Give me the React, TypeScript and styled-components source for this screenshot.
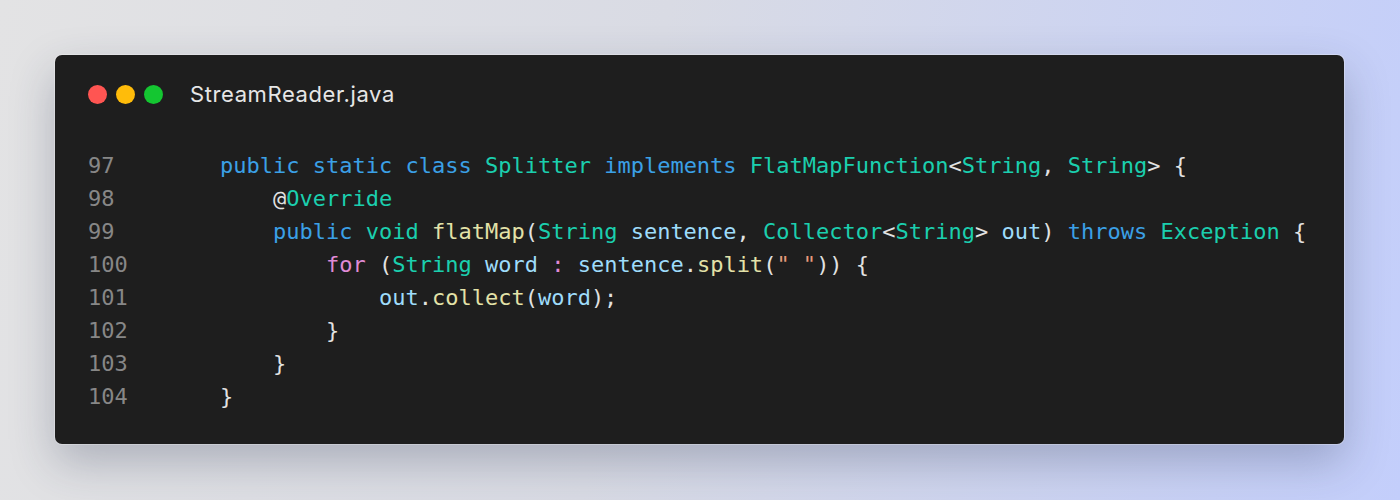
import React from "react";
import styled, { createGlobalStyle } from "styled-components";

const Global = createGlobalStyle`
  html, body { margin: 0; padding: 0; }
  body { width: 1400px; height: 500px; overflow: hidden; }
  * { box-sizing: border-box; }
`;

const Page = styled.div`
  width: 1400px;
  height: 500px;
  padding: 55px 56px 56px 55px;
  background: linear-gradient(100deg, #e3e3e4 0%, #d9dbe4 45%, #c3cefb 100%);
`;

const Window = styled.div`
  width: 100%;
  height: 100%;
  background: #1e1e1e;
  border-radius: 7px;
  box-shadow: 0 0 0 1px rgba(255, 255, 255, 0.28), 0 18px 45px rgba(40, 50, 80, 0.28);
  padding: 30px 33px 30px 33px;
  display: flex;
  flex-direction: column;
`;

const TitleBar = styled.div`
  display: flex;
  align-items: center;
  height: 19px;
`;

const Lights = styled.div`
  display: flex;
  gap: 9px;
  margin-right: 27px;
`;

const Light = styled.span<{ $c: string }>`
  width: 19px;
  height: 19px;
  border-radius: 50%;
  background: ${(p) => p.$c};
`;

const Title = styled.span`
  font-family: Inter, "Open Sans", sans-serif;
  font-size: 22px;
  color: #e6e6e6;
  letter-spacing: 0.6px;
  line-height: 19px;
`;

const Code = styled.div`
  margin-top: 45px;
  display: grid;
  grid-template-columns: 79px 1fr;
  font-family: "DejaVu Sans Mono", "Liberation Mono", monospace;
  font-size: 22px;
  line-height: 33px;
`;

const LineNo = styled.span`
  color: #878787;
`;

const LineText = styled.span`
  white-space: pre;
  color: #e2e2e2;
`;

const T = styled.span<{ $k: string }>`
  color: ${(p) =>
    ({
      kw: "#3ba0e6",
      ty: "#1bcfae",
      vr: "#9edcfb",
      fn: "#e3e2a8",
      ctl: "#e08bd6",
      str: "#e69a7b",
      pn: "#e2e2e2",
    } as Record<string, string>)[p.$k]};
`;

type Tok = [string, string];

const lines: { n: number; toks: Tok[] }[] = [
  {
    n: 97,
    toks: [
      ["pn", "    "],
      ["kw", "public"], ["pn", " "], ["kw", "static"], ["pn", " "], ["kw", "class"], ["pn", " "],
      ["ty", "Splitter"], ["pn", " "], ["kw", "implements"], ["pn", " "],
      ["ty", "FlatMapFunction"], ["pn", "<"], ["ty", "String"], ["pn", ", "], ["ty", "String"], ["pn", "> {"],
    ],
  },
  { n: 98, toks: [["pn", "        @"], ["ty", "Override"]] },
  {
    n: 99,
    toks: [
      ["pn", "        "],
      ["kw", "public"], ["pn", " "], ["ty", "void"], ["pn", " "], ["fn", "flatMap"], ["pn", "("],
      ["ty", "String"], ["pn", " "], ["vr", "sentence"], ["pn", ", "], ["ty", "Collector"], ["pn", "<"],
      ["ty", "String"], ["pn", "> "], ["vr", "out"], ["pn", ") "], ["kw", "throws"], ["pn", " "],
      ["ty", "Exception"], ["pn", " {"],
    ],
  },
  {
    n: 100,
    toks: [
      ["pn", "            "],
      ["ctl", "for"], ["pn", " ("], ["ty", "String"], ["pn", " "], ["vr", "word"], ["pn", " "],
      ["ctl", ":"], ["pn", " "], ["vr", "sentence"], ["pn", "."], ["fn", "split"], ["pn", "("],
      ["str", "\" \""], ["pn", ")) {"],
    ],
  },
  {
    n: 101,
    toks: [
      ["pn", "                "],
      ["vr", "out"], ["pn", "."], ["fn", "collect"], ["pn", "("], ["vr", "word"], ["pn", ");"],
    ],
  },
  { n: 102, toks: [["pn", "            }"]] },
  { n: 103, toks: [["pn", "        }"]] },
  { n: 104, toks: [["pn", "    }"]] },
];

export default function App() {
  return (
    <Page>
      <Global />
      <Window>
        <TitleBar>
          <Lights>
            <Light $c="#ff5552" />
            <Light $c="#ffbc0a" />
            <Light $c="#14c631" />
          </Lights>
          <Title>StreamReader.java</Title>
        </TitleBar>
        <Code>
          {lines.map((l) => (
            <React.Fragment key={l.n}>
              <LineNo>{l.n}</LineNo>
              <LineText>
                {l.toks.map(([k, s], i) => (
                  <T key={i} $k={k}>
                    {s}
                  </T>
                ))}
              </LineText>
            </React.Fragment>
          ))}
        </Code>
      </Window>
    </Page>
  );
}
